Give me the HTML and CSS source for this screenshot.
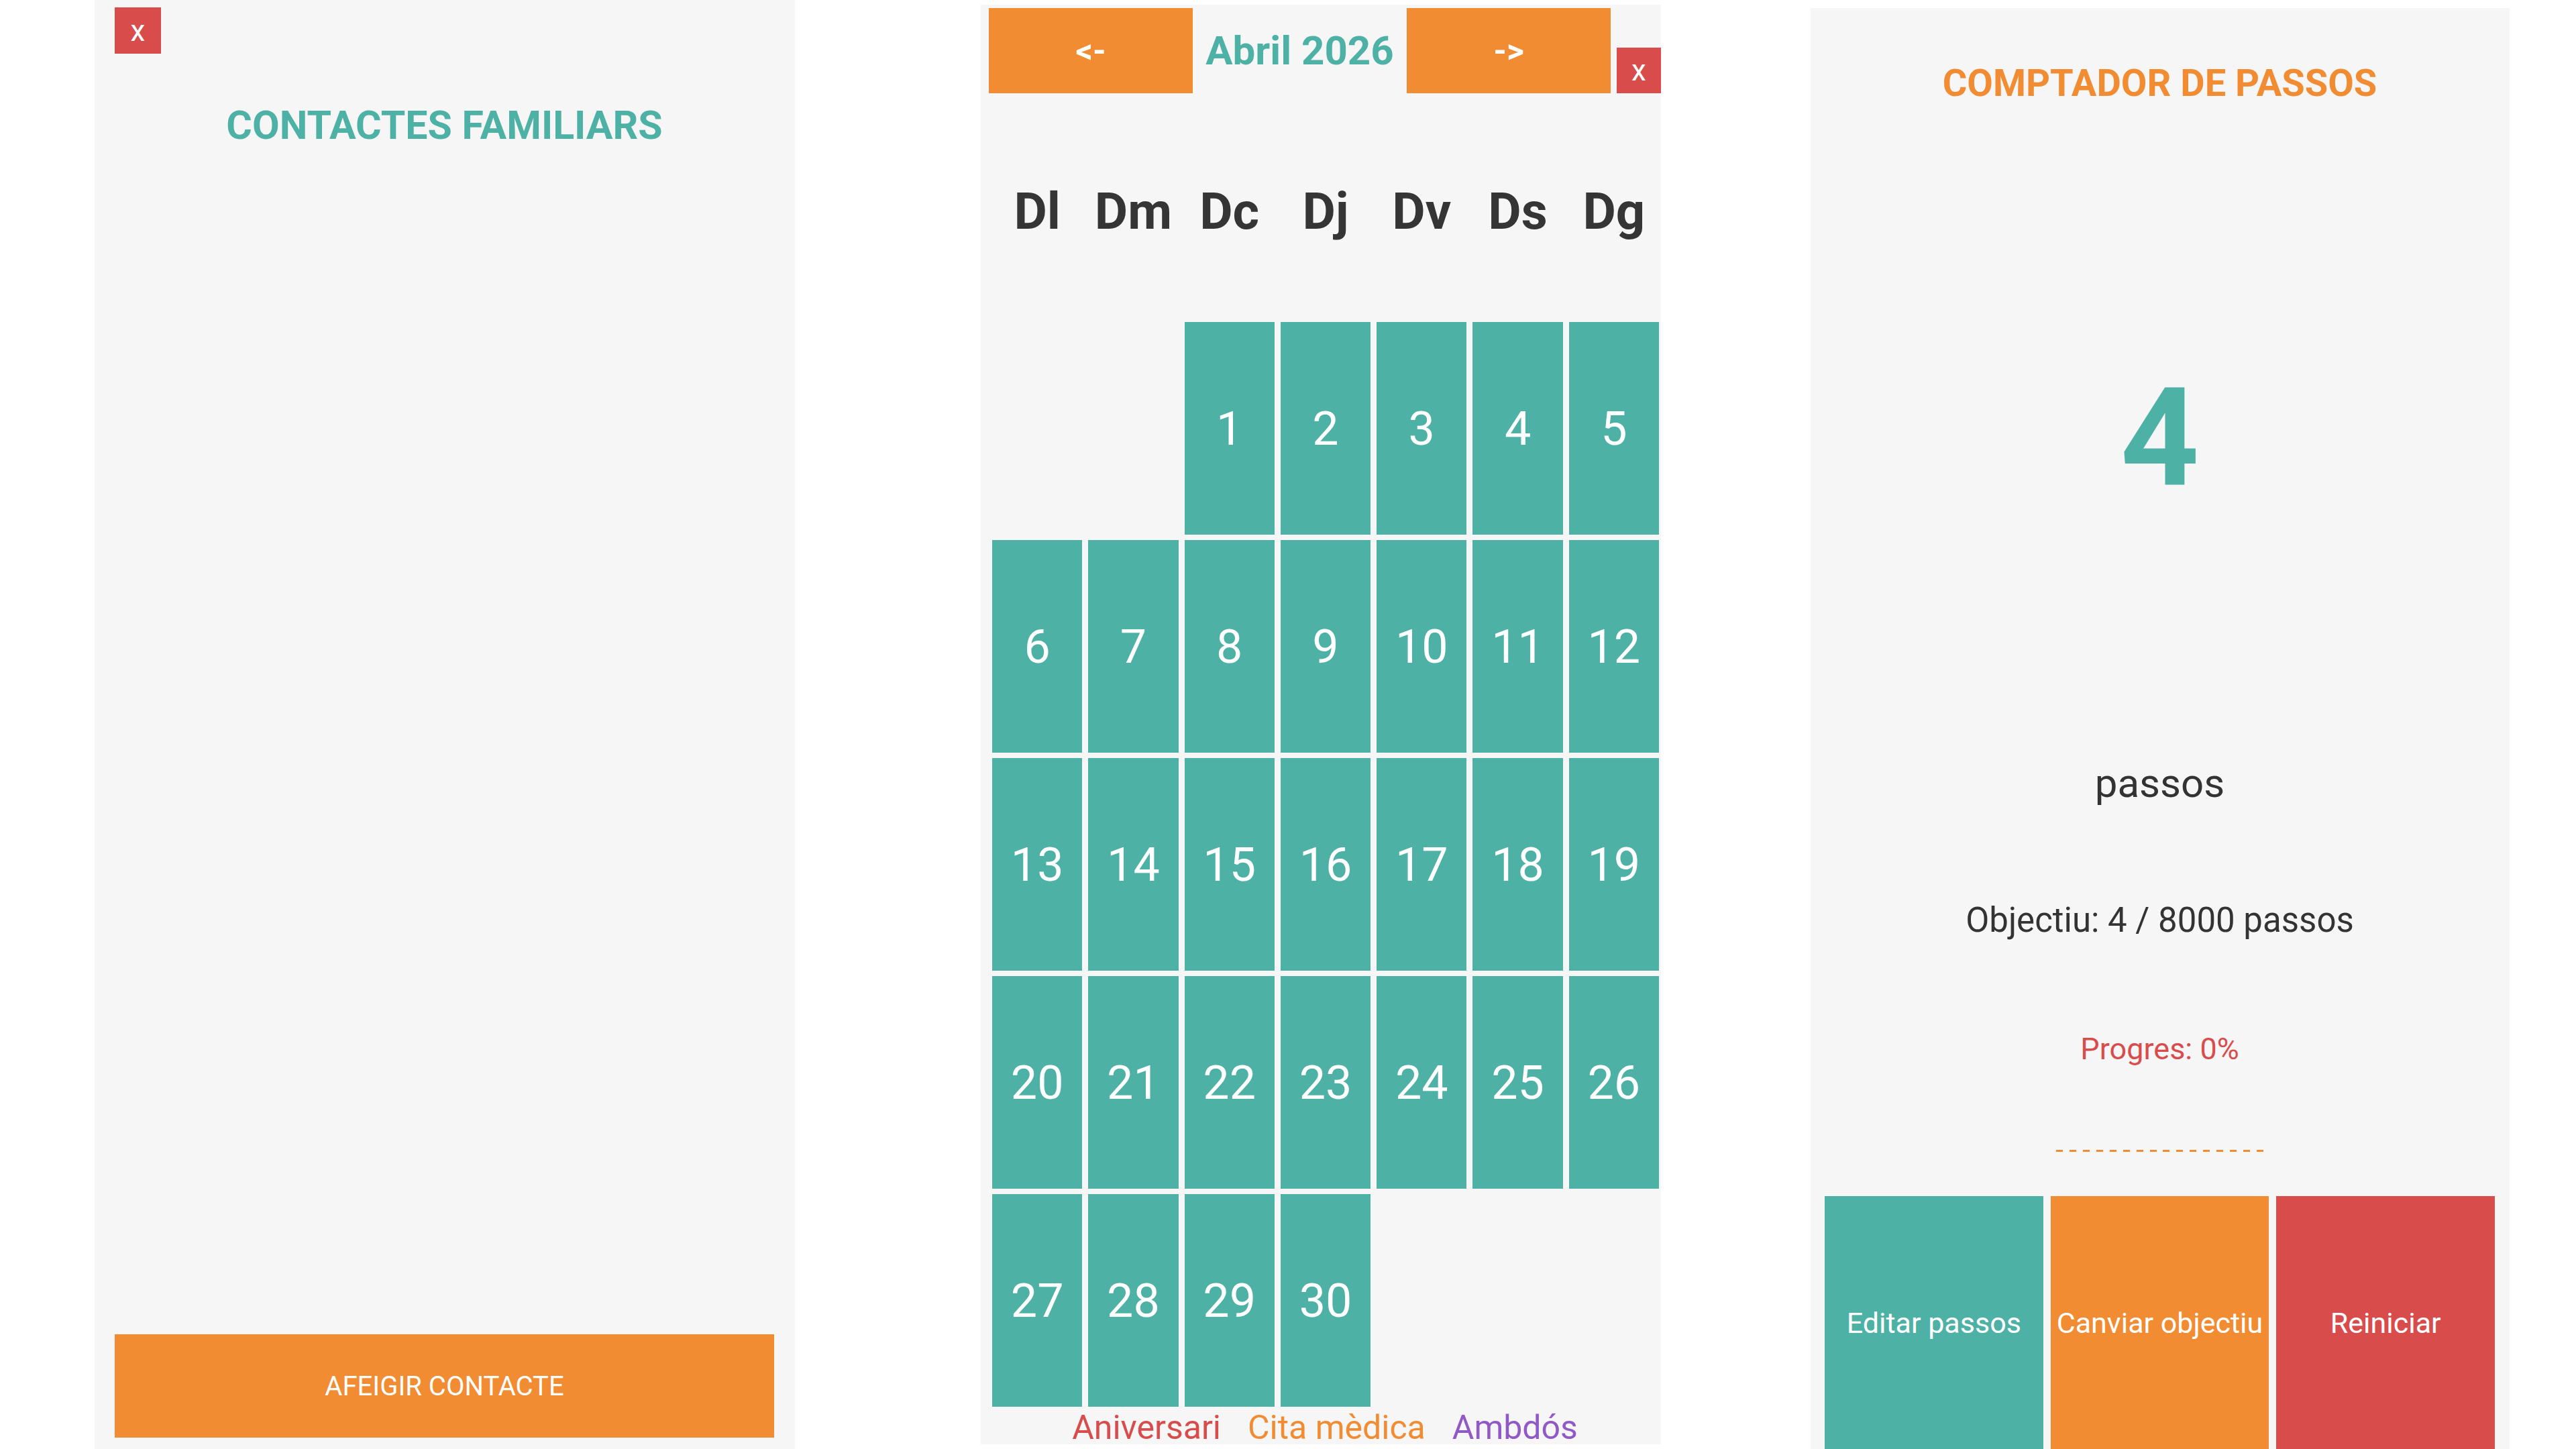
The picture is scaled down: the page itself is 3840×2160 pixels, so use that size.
FILE: index.html
```html
<!DOCTYPE html>
<html lang="ca">
<head>
  <meta charset="UTF-8" />
  <meta name="viewport" content="width=device-width, initial-scale=1.0"/>
  <title>Contactes, calendari i passos</title>
  <link rel="stylesheet" href="styles.css">
</head>
<body>

  <div class="screens">

    <!-- contactes -->
    <section class="panel contacts">
      <button class="close">x</button>
      <h2 class="title teal">CONTACTES FAMILIARS</h2>
      <button class="add-btn">AFEIGIR CONTACTE</button>
    </section>

    <!-- calendari -->
    <section class="panel calendar">
      <div class="cal-nav">
        <button class="nav-btn">&lt;-</button>
        <div class="month">Abril 2026</div>
        <button class="nav-btn">-&gt;</button>
        <button class="close close-small">x</button>
      </div>

      <div class="weekdays">
        <span>Dl</span><span>Dm</span><span>Dc</span><span>Dj</span><span>Dv</span><span>Ds</span><span>Dg</span>
      </div>

      <div class="days">
        <div class="empty"></div>
        <div class="empty"></div>
        <div class="day">1</div>
        <div class="day">2</div>
        <div class="day">3</div>
        <div class="day">4</div>
        <div class="day">5</div>
        <div class="day">6</div>
        <div class="day">7</div>
        <div class="day">8</div>
        <div class="day">9</div>
        <div class="day">10</div>
        <div class="day">11</div>
        <div class="day">12</div>
        <div class="day">13</div>
        <div class="day">14</div>
        <div class="day">15</div>
        <div class="day">16</div>
        <div class="day">17</div>
        <div class="day">18</div>
        <div class="day">19</div>
        <div class="day">20</div>
        <div class="day">21</div>
        <div class="day">22</div>
        <div class="day">23</div>
        <div class="day">24</div>
        <div class="day">25</div>
        <div class="day">26</div>
        <div class="day">27</div>
        <div class="day">28</div>
        <div class="day">29</div>
        <div class="day">30</div>
      </div>

      <div class="legend">
        <span class="anniversary">Aniversari</span>
        <span class="medical">Cita mèdica</span>
        <span class="both">Ambdós</span>
      </div>
    </section>

    <!-- comptador de passos -->
    <section class="panel steps">
      <h2 class="title orange">COMPTADOR DE PASSOS</h2>
      <div class="step-count">4</div>
      <div class="step-label">passos</div>
      <div class="goal">Objectiu: 4 / 8000 passos</div>
      <div class="progress-text">Progres: 0%</div>
      <div class="progress-bar"></div>
      <div class="step-actions">
        <button class="action teal-bg">Editar passos</button>
        <button class="action orange-bg">Canviar objectiu</button>
        <button class="action red-bg">Reiniciar</button>
      </div>
    </section>

  </div>

</body>
</html>
```

FILE: styles.css
```css
:root {
  --panel-bg: #f6f6f6;
  --teal: #4db2a5;
  --orange: #f18c32;
  --red: #d94c4c;
  --purple: #9159c6;
  --text-dark: #333333;
}

body {
  margin: 0;
  height: 2160px;
  overflow: hidden;
  background: #ffffff;
  font-family: Roboto, 'Noto Sans', sans-serif;
  color: var(--text-dark);
}

button {
  font-family: inherit;
  border: none;
  padding: 0;
  color: white;
  cursor: pointer;
}

.screens {
  display: flex;
  align-items: flex-start;
}

.panel {
  background: var(--panel-bg);
  box-sizing: border-box;
}

.title {
  margin: 0;
  font-size: 58px;
  line-height: 70px;
  font-weight: bold;
  text-align: center;
}

.teal { color: var(--teal); }
.orange { color: var(--orange); }

.close {
  width: 69px;
  height: 69px;
  background: var(--red);
  font-size: 44px;
  line-height: 1;
  display: flex;
  align-items: center;
  justify-content: center;
}

/* contactes */
.contacts {
  margin-left: 141px;
  width: 1044px;
  height: 2160px;
  padding: 11px 31px 17px 30px;
  display: flex;
  flex-direction: column;
}

.contacts .title {
  margin-top: 72px;
  font-size: 59px;
}

.add-btn {
  margin-top: auto;
  height: 154px;
  width: 100%;
  background: var(--orange);
  font-size: 40px;
}

/* calendari */
.calendar {
  margin-left: 277px;
  margin-top: 7px;
  width: 1014px;
  padding: 5px 0 0 12px;
}

.cal-nav {
  display: flex;
  align-items: flex-end;
}

.nav-btn {
  width: 304px;
  height: 127px;
  background: var(--orange);
  font-size: 50px;
  font-weight: bold;
}

.month {
  flex: 1;
  align-self: center;
  text-align: center;
  font-size: 60px;
  font-weight: bold;
  color: var(--teal);
}

.close-small {
  width: 66px;
  height: 68px;
  margin-left: 9px;
}

.weekdays, .days {
  display: grid;
  grid-template-columns: repeat(7, 1fr);
  column-gap: 9px;
  margin: 0 3px 0 5px;
}

.weekdays {
  margin-top: 131px;
  font-size: 76px;
  line-height: 91px;
  font-weight: bold;
  text-align: center;
  color: #353535;
}

.days {
  margin-top: 119px;
  grid-auto-rows: 317px;
  row-gap: 8px;
}

.day {
  background: var(--teal);
  color: white;
  font-size: 70px;
  display: flex;
  align-items: center;
  justify-content: center;
}

.legend {
  display: flex;
  justify-content: center;
  gap: 40px;
  padding-top: 6px;
  font-size: 50px;
  line-height: 50px;
}

.anniversary { color: var(--red); }
.medical { color: var(--orange); }
.both { color: var(--purple); }

/* comptador de passos */
.steps {
  margin-left: 223px;
  margin-top: 12px;
  width: 1042px;
  height: 2148px;
  padding: 0 22px 0 21px;
  text-align: center;
}

.steps .title {
  margin-top: 77px;
  font-size: 56px;
}

.step-count {
  margin-top: 371px;
  font-size: 205px;
  line-height: 246px;
  font-weight: bold;
  color: var(--teal);
}

.step-label {
  margin-top: 356px;
  font-size: 60px;
  line-height: 72px;
}

.goal {
  margin-top: 138px;
  font-size: 51px;
  line-height: 60px;
}

.progress-text {
  margin-top: 135px;
  font-size: 45px;
  line-height: 54px;
  color: var(--red);
}

.progress-bar {
  width: 309px;
  height: 3px;
  margin: 123px auto 0;
  background: repeating-linear-gradient(to right, var(--orange) 0 10px, transparent 10px 19.93px);
}

.step-actions {
  display: flex;
  gap: 11px;
  margin-top: 66px;
  height: 377px;
}

.action {
  flex: 1;
  font-size: 43px;
}

.teal-bg { background: var(--teal); }
.orange-bg { background: var(--orange); }
.red-bg { background: var(--red); }
```
